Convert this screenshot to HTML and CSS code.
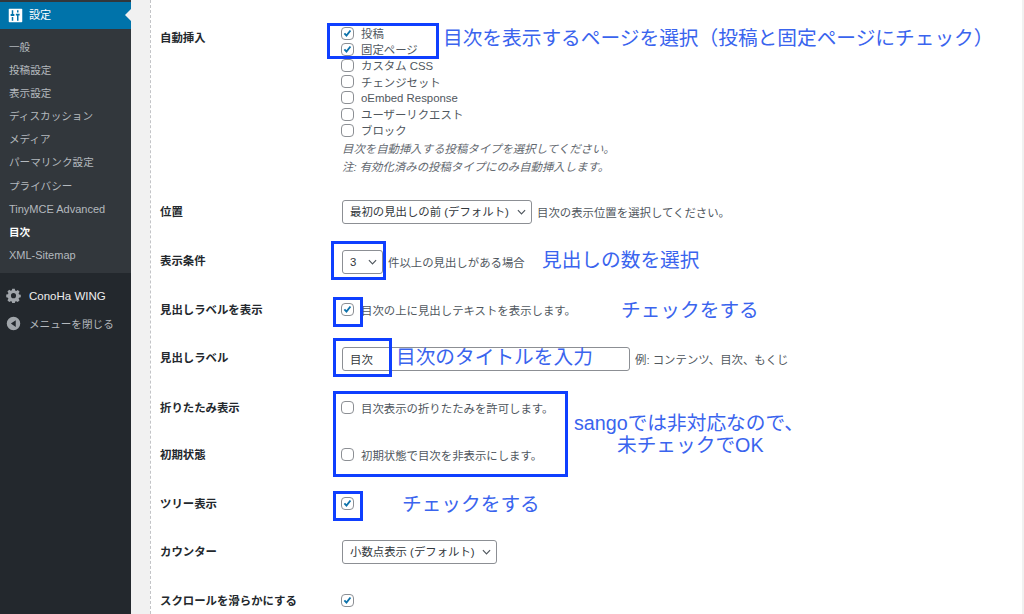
FILE: index.html
```html
<!DOCTYPE html>
<html lang="ja">
<head>
    <meta charset="UTF-8">
    <title>目次 設定</title>
    <link rel="stylesheet" href="styles.css">
</head>
<body>
    <div class="layout">
        <!-- Admin Menu -->
        <nav class="sidebar">
            <div class="menu-current">
                <svg class="menu-icon" viewBox="0 0 20 20" width="15" height="15">
                    <path fill="#fff" d="M2 1h16a1 1 0 0 1 1 1v16a1 1 0 0 1-1 1H2a1 1 0 0 1-1-1V2a1 1 0 0 1 1-1z"/>
                    <path fill="#0073aa" d="M5 3h2v5h1.500v2.500h-5V8H5zM5 12h2v5H5zM12 3h2v3h-2zM10.500 7.500h5V10H14v7h-2v-7h-1.500z"/>
                </svg>
                <span>設定</span>
            </div>
            <ul class="submenu">
                <li>一般</li>
                <li>投稿設定</li>
                <li>表示設定</li>
                <li>ディスカッション</li>
                <li>メディア</li>
                <li>パーマリンク設定</li>
                <li>プライバシー</li>
                <li class="submenu-latin">TinyMCE Advanced</li>
                <li class="submenu-active">目次</li>
                <li class="submenu-latin">XML-Sitemap</li>
            </ul>
            <div class="menu-bottom">
                <div class="menu-item menu-item-light">
                    <svg class="menu-icon" viewBox="0 0 20 20" width="15" height="15">
                        <path fill="#a0a5aa" fill-rule="evenodd" d="M8.300 1h3.400l.5 2.300 1.500.6 2-1.300 2.400 2.400-1.300 2 .6 1.500 2.300.5v3.400l-2.300.5-.6 1.500 1.300 2-2.400 2.400-2-1.300-1.500.6-.5 2.300H8.300l-.5-2.300-1.500-.6-2 1.300-2.400-2.400 1.300-2-.6-1.500-2.300-.5V8.800l2.300-.5.6-1.500-1.300-2 2.400-2.400 2 1.300 1.500-.6zM10 6.800a3.400 3.400 0 1 0 0 6.800 3.400 3.400 0 0 0 0-6.800z"/>
                    </svg>
                    <span>ConoHa WING</span>
                </div>
                <div class="menu-item">
                    <svg class="menu-icon" viewBox="0 0 20 20" width="15" height="15">
                        <path fill="#a0a5aa" fill-rule="evenodd" d="M10 1a9 9 0 1 1 0 18 9 9 0 0 1 0-18zm3 4.500L6.500 10l6.500 4.500z"/>
                    </svg>
                    <span>メニューを閉じる</span>
                </div>
            </div>
        </nav>

        <main class="content">
            <form class="panel">
                <!-- Auto insert -->
                <div class="row row-first">
                    <div class="row-label row-label-low">自動挿入</div>
                    <div>
                        <label class="check-line"><input type="checkbox" checked>投稿</label>
                        <label class="check-line"><input type="checkbox" checked>固定ページ</label>
                        <label class="check-line"><input type="checkbox">カスタム CSS</label>
                        <label class="check-line"><input type="checkbox">チェンジセット</label>
                        <label class="check-line"><input type="checkbox">oEmbed Response</label>
                        <label class="check-line"><input type="checkbox">ユーザーリクエスト</label>
                        <label class="check-line"><input type="checkbox">ブロック</label>
                        <p class="note">目次を自動挿入する投稿タイプを選択してください。</p>
                        <p class="note">注: 有効化済みの投稿タイプにのみ自動挿入します。</p>
                    </div>
                </div>

                <div class="row">
                    <div class="row-label">位置</div>
                    <div class="row-value">
                        <select class="select-position"><option>最初の見出しの前 (デフォルト)</option></select>
                        <span>目次の表示位置を選択してください。</span>
                    </div>
                </div>

                <div class="row row-wider">
                    <div class="row-label row-label-high">表示条件</div>
                    <div class="row-value">
                        <select class="select-count"><option>3</option></select>
                        <span>件以上の見出しがある場合</span>
                    </div>
                </div>

                <div class="row">
                    <div class="row-label">見出しラベルを表示</div>
                    <div class="row-value">
                        <label class="check-inline"><input type="checkbox" checked>目次の上に見出しテキストを表示します。</label>
                    </div>
                </div>

                <div class="row row-wide">
                    <div class="row-label row-label-high">見出しラベル</div>
                    <div class="row-value">
                        <input class="text-label" type="text" value="目次">
                        <span>例: コンテンツ、目次、もくじ</span>
                    </div>
                </div>

                <div class="row row-wide">
                    <div class="row-label">折りたたみ表示</div>
                    <div class="row-value">
                        <label class="check-inline"><input type="checkbox">目次表示の折りたたみを許可します。</label>
                    </div>
                </div>

                <div class="row row-tight">
                    <div class="row-label">初期状態</div>
                    <div class="row-value">
                        <label class="check-inline"><input type="checkbox">初期状態で目次を非表示にします。</label>
                    </div>
                </div>

                <div class="row row-wide">
                    <div class="row-label">ツリー表示</div>
                    <div class="row-value">
                        <label class="check-inline"><input type="checkbox" checked></label>
                    </div>
                </div>

                <div class="row">
                    <div class="row-label">カウンター</div>
                    <div class="row-value">
                        <select class="select-counter"><option>小数点表示 (デフォルト)</option></select>
                    </div>
                </div>

                <div class="row row-wide">
                    <div class="row-label">スクロールを滑らかにする</div>
                    <div class="row-value">
                        <label class="check-inline"><input type="checkbox" checked></label>
                    </div>
                </div>
            </form>

            <!-- Blue markup drawn over the screenshot -->
            <div class="mark mark-types"></div>
            <div class="mark mark-count"></div>
            <div class="mark mark-show"></div>
            <div class="mark mark-label"></div>
            <div class="mark mark-fold"></div>
            <div class="mark mark-tree"></div>

            <div class="note-blue note-types">目次を表示するページを選択（投稿と固定ページにチェック）</div>
            <div class="note-blue note-count">見出しの数を選択</div>
            <div class="note-blue note-show">チェックをする</div>
            <div class="note-blue note-label">目次のタイトルを入力</div>
            <div class="note-blue note-fold">sangoでは非対応なので、<span class="note-fold-second">未チェックでOK</span></div>
            <div class="note-blue note-tree">チェックをする</div>
        </main>
    </div>
</body>
</html>
```

FILE: styles.css
```css
* {
    box-sizing: border-box;
}

body {
    margin: 0;
    height: 100vh;
    overflow: hidden;
    background-color: #f1f1f1;
    color: #50575e;
    font-family: "Liberation Sans", "Noto Sans CJK JP", sans-serif;
    font-size: 11.4px;
}

.layout {
    display: flex;
    height: 100%;
}

/* Admin Menu */
.sidebar {
    display: flex;
    flex-direction: column;
    flex: 0 0 131px;
    padding-top: 2px;
    background-color: #32373c;
    color: #b4b9be;
    font-size: 10.6px;
}

.menu-current {
    position: relative;
    display: flex;
    align-items: center;
    gap: 6px;
    height: 27px;
    padding-left: 8px;
    background-color: #0073aa;
    color: #fff;
    font-size: 11.1px;
    line-height: 25px;
}

.menu-current::after {
    content: "";
    position: absolute;
    right: 0;
    top: 7px;
    border-top: 6px solid transparent;
    border-bottom: 6px solid transparent;
    border-right: 6px solid #f1f1f1;
}

.menu-icon {
    flex: none;
}

.submenu {
    list-style: none;
    margin: 0;
    padding: 7px 0 0 9px;
    height: 244px;
}

.submenu li {
    height: 23.1px;
    line-height: 23.1px;
}

.submenu .submenu-latin {
    font-size: 11px;
}

.submenu .submenu-active {
    color: #fff;
    font-weight: bold;
}

.menu-bottom {
    flex: 1;
    padding-top: 9px;
    background-color: #23282d;
}

.menu-item {
    display: flex;
    align-items: center;
    gap: 8px;
    height: 27.5px;
    padding-left: 6px;
}

.menu-item-light {
    color: #eee;
    font-size: 11.5px;
}

/* Settings panel */
.content {
    position: relative;
    flex: 1;
    padding: 0 2px 0 19px;
}

.panel {
    height: 100%;
    padding-left: 9px;
    background-color: #fff;
    border-left: 1px dashed #c3c4c7;
}

.row {
    display: grid;
    grid-template-columns: 182px 1fr;
    margin-top: 24px;
}

.row-first {
    margin-top: 0;
    padding-top: 25px;
}

.row-tight {
    margin-top: 23px;
}

.row-wide {
    margin-top: 25px;
}

.row-wider {
    margin-top: 26px;
}

.row-label {
    color: #23282d;
    font-weight: bold;
    font-size: 11.4px;
    line-height: 24px;
}

.row-label-low {
    padding-top: 1px;
}

.row-label-high {
    margin-top: -1px;
}

.row-value {
    display: flex;
    align-items: center;
    gap: 5px;
    height: 24px;
}

.check-line {
    display: flex;
    align-items: center;
    gap: 7px;
    height: 16.2px;
}

.check-inline {
    display: flex;
    align-items: center;
    gap: 7px;
}

input[type="checkbox"] {
    appearance: none;
    flex: none;
    width: 13px;
    height: 13px;
    margin: 0 0 0 -1px;
    background-color: #fff;
    border: 1px solid #8c8f94;
    border-radius: 4px;
}

input[type="checkbox"]:checked {
    background-image: url("data:image/svg+xml,%3Csvg xmlns='http://www.w3.org/2000/svg' viewBox='0 0 13 13'%3E%3Cpath d='M2.800 6.300l2.500 2.700 4.700-6' fill='none' stroke='%230f73ab' stroke-width='2.200'/%3E%3C/svg%3E");
}

.note {
    margin: 0;
    color: #646970;
    font-style: italic;
    line-height: 18px;
}

.note:first-of-type {
    margin-top: 1.600px;
}

select,
.text-label {
    height: 24px;
    padding: 0 7px;
    background-color: #fff;
    border: 1px solid #8c8f94;
    border-radius: 3px;
    color: #32373c;
    font-family: inherit;
    font-size: 11.4px;
}

select {
    appearance: none;
    background-image: url("data:image/svg+xml,%3Csvg xmlns='http://www.w3.org/2000/svg' viewBox='0 0 10 6'%3E%3Cpath d='M1 1l4 4 4-4' fill='none' stroke='%2350575e' stroke-width='1.300'/%3E%3C/svg%3E");
    background-repeat: no-repeat;
    background-position: right 5px center;
    background-size: 9px 6px;
}

.select-position {
    width: 190px;
}

.select-count {
    width: 41px;
}

.select-counter {
    width: 155px;
}

.text-label {
    width: 288px;
}

/* Blue markup */
.mark {
    position: absolute;
    border: 3px solid #0f3fff;
}

.mark-types {
    left: 196px;
    top: 23px;
    width: 112px;
    height: 36px;
}

.mark-count {
    left: 200px;
    top: 241px;
    width: 55px;
    height: 39px;
}

.mark-show {
    left: 202px;
    top: 297px;
    width: 30px;
    height: 30px;
}

.mark-label {
    left: 202px;
    top: 338px;
    width: 59px;
    height: 39px;
}

.mark-fold {
    left: 202px;
    top: 391px;
    width: 235px;
    height: 86px;
}

.mark-tree {
    left: 202px;
    top: 491px;
    width: 30px;
    height: 30px;
}

.note-blue {
    position: absolute;
    color: #3a64ee;
    font-size: 19.7px;
    line-height: 22px;
    white-space: nowrap;
}

.note-types {
    left: 312px;
    top: 27px;
}

.note-count {
    left: 411px;
    top: 249px;
}

.note-show {
    left: 490px;
    top: 299px;
}

.note-label {
    left: 265px;
    top: 346px;
}

.note-fold {
    left: 443px;
    top: 412px;
}

.note-fold-second {
    display: block;
    margin-left: 43px;
}

.note-tree {
    left: 271px;
    top: 493px;
}
```
